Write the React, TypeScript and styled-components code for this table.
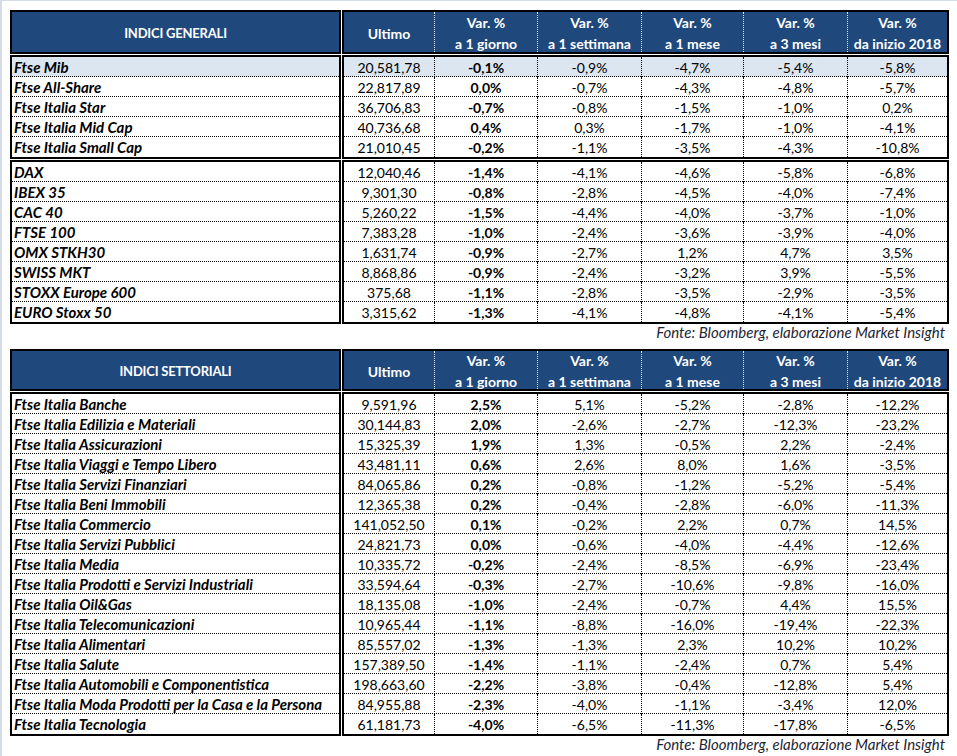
import React from "react";
import styled, {createGlobalStyle} from "styled-components";

const GlobalStyle = createGlobalStyle`
  html, body {
    margin: 0;
    padding: 0;
    background: #fff;
  }
  body {
    font-family: Lato, "Open Sans", sans-serif;
    color: #000;
  }
`;

const Page = styled.div`
  width: 957px;
  height: 756px;
  box-sizing: border-box;
  border-top: 1px solid #d5dce8;
  border-left: 2px solid #d5dce8;
  padding: 9px 8px 0 8px;
  overflow: hidden;
`;

const Section = styled.div`
  display: flex;
  flex-direction: column;
  gap: 1px;
`;

const Band = styled.div`
  display: flex;
  gap: 1px;
`;

const Box = styled.div<{ $head?: boolean; $name?: boolean }>`
  box-sizing: border-box;
  border: 2px solid #000;
  background: ${p => (p.$head ? "#1f497d" : "#fff")};
  ${p => (p.$name ? "width: 331px;" : "flex: 1;")}
`;

const HeadTitle = styled.div<{ $h: number }>`
  height: ${p => p.$h}px;
  display: flex;
  align-items: center;
  justify-content: center;
  color: #fff;
  font-weight: 700;
  font-size: 13px;
  letter-spacing: -0.2px;
  padding-top: 2px;
  box-sizing: border-box;
`;

const Cols = styled.div`
  display: grid;
  grid-template-columns: 90px 103px 104px 102px 104px 1fr;
`;

const HeadCell = styled.div<{ $first?: boolean; $h: number }>`
  height: ${p => p.$h}px;
  display: flex;
  flex-direction: column;
  align-items: center;
  justify-content: center;
  color: #fff;
  font-weight: 700;
  font-size: 14px;
  line-height: 21px;
  padding-top: 2px;
  box-sizing: border-box;
  border-left: ${p => (p.$first ? "none" : "1px dotted #dfe6f0")};
`;

const NameCell = styled.div<{ $hl?: boolean; $last?: boolean }>`
  height: 20px;
  box-sizing: border-box;
  padding: 1px 0 0 2px;
  font-size: 15px;
  line-height: 19px;
  font-weight: 700;
  font-style: italic;
  white-space: nowrap;
  background: ${p => (p.$hl ? "#dce6f1" : "transparent")};
  border-bottom: ${p => (p.$last ? "none" : "1px dotted #000")};
`;

const ValueRow = styled(Cols)<{ $hl?: boolean; $last?: boolean }>`
  height: 20px;
  box-sizing: border-box;
  background: ${p => (p.$hl ? "#dce6f1" : "transparent")};
  border-bottom: ${p => (p.$last ? "none" : "1px dotted #000")};
`;

const ValueCell = styled.div<{ $first?: boolean; $bold?: boolean }>`
  text-align: center;
  font-size: 14px;
  line-height: 19px;
  padding-top: 1px;
  font-weight: ${p => (p.$bold ? 700 : 400)};
  border-left: ${p => (p.$first ? "none" : "1px dotted #000")};
`;

const Source = styled.div`
  height: 24px;
  box-sizing: border-box;
  text-align: right;
  padding: 0 4px 0 0;
  font-size: 15px;
  line-height: 15px;
  font-style: italic;
  color: #1d2535;
`;

type Row = [string, string, string, string, string, string, string];

const generali: Row[][] = [
    [
        ["Ftse Mib", "20,581,78", "-0,1%", "-0,9%", "-4,7%", "-5,4%", "-5,8%"],
        ["Ftse All-Share", "22,817,89", "0,0%", "-0,7%", "-4,3%", "-4,8%", "-5,7%"],
        ["Ftse Italia Star", "36,706,83", "-0,7%", "-0,8%", "-1,5%", "-1,0%", "0,2%"],
        ["Ftse Italia Mid Cap", "40,736,68", "0,4%", "0,3%", "-1,7%", "-1,0%", "-4,1%"],
        ["Ftse Italia Small Cap", "21,010,45", "-0,2%", "-1,1%", "-3,5%", "-4,3%", "-10,8%"],
    ],
    [
        ["DAX", "12,040,46", "-1,4%", "-4,1%", "-4,6%", "-5,8%", "-6,8%"],
        ["IBEX 35", "9,301,30", "-0,8%", "-2,8%", "-4,5%", "-4,0%", "-7,4%"],
        ["CAC 40", "5,260,22", "-1,5%", "-4,4%", "-4,0%", "-3,7%", "-1,0%"],
        ["FTSE 100", "7,383,28", "-1,0%", "-2,4%", "-3,6%", "-3,9%", "-4,0%"],
        ["OMX STKH30", "1,631,74", "-0,9%", "-2,7%", "1,2%", "4,7%", "3,5%"],
        ["SWISS MKT", "8,868,86", "-0,9%", "-2,4%", "-3,2%", "3,9%", "-5,5%"],
        ["STOXX Europe 600", "375,68", "-1,1%", "-2,8%", "-3,5%", "-2,9%", "-3,5%"],
        ["EURO Stoxx 50", "3,315,62", "-1,3%", "-4,1%", "-4,8%", "-4,1%", "-5,4%"],
    ],
];

const settoriali: Row[][] = [
    [
        ["Ftse Italia Banche", "9,591,96", "2,5%", "5,1%", "-5,2%", "-2,8%", "-12,2%"],
        ["Ftse Italia Edilizia e Materiali", "30,144,83", "2,0%", "-2,6%", "-2,7%", "-12,3%", "-23,2%"],
        ["Ftse Italia Assicurazioni", "15,325,39", "1,9%", "1,3%", "-0,5%", "2,2%", "-2,4%"],
        ["Ftse Italia Viaggi e Tempo Libero", "43,481,11", "0,6%", "2,6%", "8,0%", "1,6%", "-3,5%"],
        ["Ftse Italia Servizi Finanziari", "84,065,86", "0,2%", "-0,8%", "-1,2%", "-5,2%", "-5,4%"],
        ["Ftse Italia Beni Immobili", "12,365,38", "0,2%", "-0,4%", "-2,8%", "-6,0%", "-11,3%"],
        ["Ftse Italia Commercio", "141,052,50", "0,1%", "-0,2%", "2,2%", "0,7%", "14,5%"],
        ["Ftse Italia Servizi Pubblici", "24,821,73", "0,0%", "-0,6%", "-4,0%", "-4,4%", "-12,6%"],
        ["Ftse Italia Media", "10,335,72", "-0,2%", "-2,4%", "-8,5%", "-6,9%", "-23,4%"],
        ["Ftse Italia Prodotti e Servizi Industriali", "33,594,64", "-0,3%", "-2,7%", "-10,6%", "-9,8%", "-16,0%"],
        ["Ftse Italia Oil&Gas", "18,135,08", "-1,0%", "-2,4%", "-0,7%", "4,4%", "15,5%"],
        ["Ftse Italia Telecomunicazioni", "10,965,44", "-1,1%", "-8,8%", "-16,0%", "-19,4%", "-22,3%"],
        ["Ftse Italia Alimentari", "85,557,02", "-1,3%", "-1,3%", "2,3%", "10,2%", "10,2%"],
        ["Ftse Italia Salute", "157,389,50", "-1,4%", "-1,1%", "-2,4%", "0,7%", "5,4%"],
        ["Ftse Italia Automobili e Componentistica", "198,663,60", "-2,2%", "-3,8%", "-0,4%", "-12,8%", "5,4%"],
        ["Ftse Italia Moda Prodotti per la Casa e la Persona", "84,955,88", "-2,3%", "-4,0%", "-1,1%", "-3,4%", "12,0%"],
        ["Ftse Italia Tecnologia", "61,181,73", "-4,0%", "-6,5%", "-11,3%", "-17,8%", "-6,5%"],
    ],
];

const heads = [
    ["Ultimo"],
    ["Var. %", "a 1 giorno"],
    ["Var. %", "a 1 settimana"],
    ["Var. %", "a 1 mese"],
    ["Var. %", "a 3 mesi"],
    ["Var. %", "da inizio 2018"],
];

const Table: React.FC<{ title: string; groups: Row[][]; headHeight: number; highlightFirst?: boolean }> = props => {
    return (
        <Section>
            <Band>
                <Box $head $name>
                    <HeadTitle $h={props.headHeight}>{props.title}</HeadTitle>
                </Box>
                <Box $head>
                    <Cols>
                        {heads.map((h, i) => (
                            <HeadCell key={i} $first={i === 0} $h={props.headHeight}>
                                {h.map(line => <span key={line}>{line}</span>)}
                            </HeadCell>
                        ))}
                    </Cols>
                </Box>
            </Band>
            {props.groups.map((group, g) => (
                <Band key={g}>
                    <Box $name>
                        {group.map((row, r) => (
                            <NameCell key={row[0]}
                                      $hl={props.highlightFirst && g === 0 && r === 0}
                                      $last={r === group.length - 1}>
                                {row[0]}
                            </NameCell>
                        ))}
                    </Box>
                    <Box>
                        {group.map((row, r) => (
                            <ValueRow key={row[0]}
                                      $hl={props.highlightFirst && g === 0 && r === 0}
                                      $last={r === group.length - 1}>
                                {row.slice(1).map((v, c) => (
                                    <ValueCell key={c} $first={c === 0} $bold={c === 1}>{v}</ValueCell>
                                ))}
                            </ValueRow>
                        ))}
                    </Box>
                </Band>
            ))}
            <Source>Fonte: Bloomberg, elaborazione Market Insight</Source>
        </Section>
    );
};

export default function App() {
    return (
        <>
            <GlobalStyle/>
            <Page>
                <Table title={"INDICI GENERALI"} groups={generali} headHeight={40} highlightFirst/>
                <Table title={"INDICI SETTORIALI"} groups={settoriali} headHeight={38}/>
            </Page>
        </>
    );
}
